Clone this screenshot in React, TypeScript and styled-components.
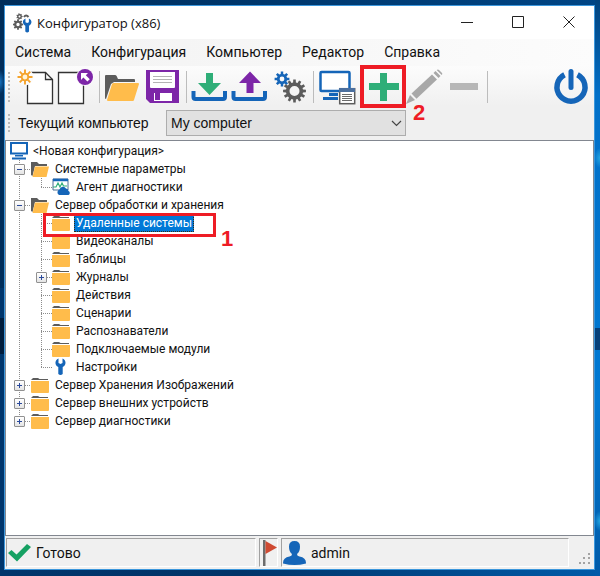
import React, { useState } from "react";
import styled, { createGlobalStyle, css } from "styled-components";

const titleFont = `"Open Sans", "Noto Sans", sans-serif`;
const ui = `Roboto, "Noto Sans", sans-serif`;
const formFont = `"Liberation Sans", Arial, sans-serif`;

const c = {
  blue: "#1565b8",
  green: "#2fae78",
  purple: "#7d26a8",
  orange: "#ffbc4b",
  gray: "#5c5c5c",
  disabled: "#a8a8a8",
  red: "#ee1c25",
};

const GlobalStyle = createGlobalStyle`
  *, *::before, *::after { box-sizing: border-box; }
  body { margin: 0; font-family: ${ui}; color: #111; }
  button, select { font: inherit; color: inherit; }
  svg { display: block; }
`;

const Desktop = styled.div`
  min-height: 100vh;
  display: flex;
  padding: 5px 5px 6px 4px;
  background:
    radial-gradient(ellipse 5px 12px at 0 82px, #1571be, transparent),
    linear-gradient(#001c3c, #001c3c) 0 318px / 4px 36px no-repeat,
    linear-gradient(#063f78, #063f78) right 328px / 5px 22px no-repeat,
    radial-gradient(ellipse 6px 10px at 100% 158px, #25a5e0, transparent),
    radial-gradient(ellipse 6px 10px at 100% 521px, #25a5e0, transparent),
    linear-gradient(#02427c, #0270c8 95px, #0078d2 400px, #005aa8) right / 5px 100% no-repeat,
    linear-gradient(90deg, #002d5a, #004585) top / 100% 50% no-repeat,
    linear-gradient(90deg, #00356b, #003468 40%, #005aa8);
`;

const Window = styled.main`
  flex: 1;
  min-width: 0;
  display: flex;
  flex-direction: column;
  border: 1px solid #3c97dc;
  background: #f0f0f0;
`;

const TitleBar = styled.header`
  display: flex;
  align-items: flex-start;
  height: 33px;
  padding-left: 8px;
  background: #fff;
`;

const TitleText = styled.div`
  flex: 1;
  display: flex;
  align-items: center;
  gap: 5px;
  height: 33px;
`;

const Title = styled.h1`
  margin: 0;
  font: 400 13px/20px ${titleFont};
  white-space: nowrap;
`;

const CaptionButton = styled.button`
  width: 51px;
  height: 31px;
  padding: 0;
  border: 0;
  background: none;
  display: grid;
  place-items: center;
  &:hover { background: #e5e5e5; }
`;

const MenuBar = styled.nav`
  display: flex;
  height: 27px;
  background: linear-gradient(90deg, #f2f2f2, #fcfcfc);
`;

const MenuItem = styled.button`
  padding: 0 10px;
  border: 0;
  background: none;
  font-size: 14px;
  line-height: 27px;
  white-space: nowrap;
`;

const ToolBars = styled.div`
  background: linear-gradient(#fcfcfc, #f0f0f0 40px);
`;

const ToolBar = styled.div`
  display: flex;
  align-items: center;
  height: 41px;
  padding: 0 3px;
`;

const Grip = styled.span<{ $dots: number }>`
  width: 2px;
  height: ${(p) => p.$dots * 4 - 2}px;
  margin-right: 6px;
  background: repeating-linear-gradient(#b9b9b9 0 2px, transparent 2px 4px);
`;

const ToolButton = styled.button<{ $end?: boolean }>`
  position: relative;
  flex: none;
  width: 40px;
  height: 40px;
  padding: 0;
  border: 0;
  background: none;
  ${(p) => p.$end && css`margin-left: auto;`}
`;

const Separator = styled.span`
  flex: none;
  width: 1px;
  height: 32px;
  margin: 0 3px;
  background: #bcbcbc;
`;

const ButtonMark = styled.span`
  position: absolute;
  z-index: 1;
  top: -2px;
  left: -4px;
  width: 46px;
  height: 43px;
  border: 4px solid ${c.red};
  pointer-events: none;
`;

const MarkNumber = styled.span<{ $x: number; $y: number }>`
  position: absolute;
  z-index: 1;
  left: ${(p) => p.$x}px;
  top: ${(p) => p.$y}px;
  color: ${c.red};
  font: 700 22px/22px ${formFont};
  pointer-events: none;
`;

const ComputerBar = styled.div`
  display: flex;
  align-items: center;
  height: 33px;
  padding: 1px 3px 2px;
  font: 14px/20px ${formFont};
`;

const ComputerLabel = styled.label`
  width: 150px;
  padding-left: 2px;
  white-space: nowrap;
`;

const SelectBox = styled.div`
  display: grid;
  align-items: center;
  width: 240px;
  & > * { grid-area: 1 / 1; }
  & > svg { justify-self: end; margin-right: 4px; pointer-events: none; }
`;

const Select = styled.select`
  appearance: none;
  width: 100%;
  height: 26px;
  padding: 0 20px 0 4px;
  border: 1px solid #adadad;
  border-radius: 0;
  background: #e1e1e1;
`;

const TreePanel = styled.section`
  flex: 1;
  padding: 1px 3px 8px;
  border: 1px solid #828790;
  background: #fff;
`;

const Branch = styled.ul`
  margin: 0;
  padding: 0;
  list-style: none;
`;

const Row = styled.div`
  position: relative;
  display: flex;
  align-items: center;
  height: 18px;
`;

const dotsY = "repeating-linear-gradient(#8c8c8c 0 1px, transparent 1px 2px)";
const dotsX = "repeating-linear-gradient(90deg, #8c8c8c 0 1px, transparent 1px 2px)";

const Guide = styled.span<{ $inner?: boolean; $elbow?: boolean; $last?: boolean }>`
  flex: none;
  display: grid;
  align-items: center;
  width: ${(p) => (p.$inner ? 21 : 22)}px;
  height: 18px;
  padding-left: 5px;
  background:
    ${dotsY} 10px 0 / 1px ${(p) => (p.$last ? "9px" : "100%")} no-repeat
    ${(p) => p.$elbow && css`, ${dotsX} 10px 9px / 12px 1px no-repeat`};
`;

const Expander = styled.button`
  width: 11px;
  height: 11px;
  padding: 0;
  border: 1px solid #919191;
  border-radius: 1px;
  background: linear-gradient(#fff, #e4e4e4);
`;

const NodeLabel = styled.button<{ $selected: boolean }>`
  height: 17px;
  margin-left: 4px;
  padding: 0 1px;
  border: 1px solid transparent;
  background: none;
  font-size: 12px;
  line-height: 15px;
  white-space: nowrap;
  ${(p) => p.$selected && css`
    border: 1px dotted #3a2a10;
    background: #0078d7;
    color: #fff;
  `}
`;

const RowMark = styled.span`
  position: absolute;
  z-index: 1;
  top: -1px;
  left: 34px;
  width: 173px;
  height: 24px;
  border: 3px solid ${c.red};
  pointer-events: none;
`;

const StatusBar = styled.footer`
  display: flex;
  gap: 3px;
  height: 33px;
  padding: 2px 1px;
  font-size: 14px;
`;

const Pane = styled.div<{ $width?: number }>`
  display: flex;
  align-items: center;
  gap: 5px;
  ${(p) => (p.$width ? css`flex: 0 0 ${p.$width}px;` : css`flex: 1;`)}
  border: 1px solid;
  border-color: #a0a0a0 #fff #fff #a0a0a0;
`;

const SizeGrip = styled.span`
  align-self: flex-end;
  margin-left: 6px;
  padding: 0 2px 2px 0;
`;

function gear(cx: number, cy: number, outer: number, root: number, hole: number, teeth: number) {
  const pts: string[] = [];
  for (let i = 0; i < teeth; i++) {
    const a = (i * 2 * Math.PI) / teeth;
    const w = Math.PI / teeth;
    [[-0.62, root], [-0.42, outer], [0.42, outer], [0.62, root]].forEach(([k, r]) => {
      pts.push(`${(cx + r * Math.cos(a + k * w)).toFixed(2)} ${(cy + r * Math.sin(a + k * w)).toFixed(2)}`);
    });
  }
  return `M${pts.join("L")}Z M${cx + hole} ${cy}a${hole} ${hole} 0 1 0 ${-2 * hole} 0a${hole} ${hole} 0 1 0 ${2 * hole} 0Z`;
}

const Tool = ({ children }: { children: React.ReactNode }) => (
  <svg width="40" height="40" viewBox="0 0 40 40" fill="none" aria-hidden="true">{children}</svg>
);

const NewIcon = () => (
  <Tool>
    <path d="M11.500 5.500H29.500L36.500 12.500V36.500H11.500Z" fill="#fff" stroke="#333" strokeWidth="1.300" />
    <path d="M29.500 5.500V12.500H36.500" stroke="#333" strokeWidth="1.300" />
    <circle cx="9" cy="10" r="8.500" fill="#fbfbfb" />
    <path d="M9 2.500V17.500M1.500 10H16.500M3.700 4.700L14.300 15.300M14.300 4.700L3.700 15.300" stroke="#f5a32b" strokeWidth="1.900" />
    <circle cx="9" cy="10" r="3.300" fill="#fff4d8" stroke="#f5a32b" strokeWidth="1.800" />
  </Tool>
);
const OpenRefIcon = () => (
  <Tool>
    <path d="M2.500 5.500H27.500V36.500H2.500Z" fill="#fff" stroke="#333" strokeWidth="1.300" />
    <circle cx="29" cy="10" r="9" fill="#fbfbfb" />
    <circle cx="29" cy="10" r="8" fill={c.purple} />
    <path d="M25 6H32L29.800 8.200L33.800 12.200L31.400 14.600L27.400 10.600L25 13Z" fill="#fff" />
  </Tool>
);
const OpenIcon = () => (
  <Tool>
    <path d="M2 9Q2 8 3 8H12Q13 8 13.600 9L15 12H31Q32 12 32 13V15H11L8 17L3 32Q2 32 2 31Z" fill={c.gray} />
    <path d="M11 16H35Q36 16 36 17L31 33Q30.700 34 30 34H5Q4 34 4 33L9 17Q9.500 16 11 16Z" fill={c.orange} />
  </Tool>
);
const SaveIcon = () => (
  <Tool>
    <path d="M3 3H36V36H7L3 32Z" fill={c.purple} />
    <path d="M7 5H32V20Q32 21 31 21H8Q7 21 7 20Z" fill="#fff" />
    <path d="M10 9.500H29M10 12.500H29M10 15.500H29" stroke="#b4b4b4" />
    <path d="M11 26H29V34H11Z" fill="#fff" />
    <path d="M12 26H17V33H12Z" fill={c.purple} />
  </Tool>
);
const Tray = () => <path d="M3.500 24V30Q3.500 32 5.500 32H33Q35 32 35 30V24" stroke={c.blue} strokeWidth="4" />;
const DownloadIcon = () => (
  <Tool>
    <Tray />
    <path d="M16 6H23V16H31L19.500 28L8 16H16Z" fill={c.green} />
  </Tool>
);
const UploadIcon = () => (
  <Tool>
    <Tray />
    <path d="M20 4.500L31 16H23.500V26H16.500V16H9Z" fill={c.purple} />
  </Tool>
);
const GearsIcon = () => (
  <Tool>
    <path d={gear(12, 12, 7.5, 5.2, 2.4, 8)} fill={c.blue} fillRule="evenodd" />
    <path d={gear(24.5, 24, 11.5, 8.6, 5, 12)} fill={c.gray} fillRule="evenodd" />
  </Tool>
);
const ComputerIcon = () => (
  <Tool>
    <rect x="3.500" y="5" width="29" height="19" rx="1" fill="#fff" stroke={c.blue} strokeWidth="2.500" />
    <path d="M12 26H21V29H12ZM6 30H21V33H6Z" fill={c.blue} />
    <rect x="22.700" y="21.700" width="15" height="15" fill="#fff" stroke={c.gray} strokeWidth="1.500" />
    <path d="M22 21H38V25H22Z" fill="#4b6f9e" />
    <path d="M25 27.500H35M25 29.500H35M25 31.500H35M25 33.500H35" stroke="#6a6a6a" />
  </Tool>
);
const PlusIcon = () => (
  <Tool><path d="M16 6H23V16H35V23H23V34H16V23H5V16H16Z" fill={c.green} /></Tool>
);
const PencilIcon = () => (
  <Tool>
    <path d="M2 37L6 28L11 33Z" fill={c.disabled} />
    <path d="M7.500 26.500L28 7.500L33 12.500L12.500 31.700Z" fill={c.disabled} />
    <path d="M29.500 6L31.500 4L36.500 9L34.500 11Z" fill={c.disabled} />
    <path d="M32.700 3Q34 2 35 3L38 6Q38.800 7 37.700 8Z" fill={c.disabled} />
  </Tool>
);
const MinusIcon = () => <Tool><path d="M6 16H34V23H6Z" fill="#b7b7b7" /></Tool>;
const PowerIcon = () => (
  <Tool>
    <path d="M13.500 7.800A14 14 0 1 0 26.500 7.800" stroke={c.blue} strokeWidth="5.500" />
    <path d="M20 4.500V20.500" stroke={c.blue} strokeWidth="5" strokeLinecap="round" />
  </Tool>
);

const wrench = "M3.500 0.500C-0.500 2 -0.500 7.500 3.300 9V16Q5.500 18 7.700 16V9C11.500 7.500 11.500 2 7.500 0.500V5L5.500 6L3.500 5Z";

const AppIcon = () => (
  <svg width="19" height="20" viewBox="0 0 19 20" aria-hidden="true">
    <path d={gear(5, 11.5, 5.2, 3.9, 1.7, 8)} fill={c.gray} fillRule="evenodd" />
    <path d={gear(6.5, 3.5, 3.2, 2.4, 1, 7)} fill={c.gray} fillRule="evenodd" />
    <path d="M11 4Q13 1 15.500 4" fill="none" stroke={c.gray} strokeWidth="2" />
    <path d={wrench} transform="translate(9.500 5) scale(0.850)" fill={c.blue} />
  </svg>
);

type Kind = "computer" | "open" | "folder" | "agent" | "wrench";

function NodeIcon({ kind }: { kind: Kind }) {
  return (
    <svg width="18" height="18" viewBox="0 0 18 18" fill="none" overflow="visible" aria-hidden="true">
      {kind === "computer" && (
        <>
          <rect x="2" y="1" width="16" height="10.500" fill="#fff" stroke={c.blue} strokeWidth="2" />
          <path d="M6 13H14V14.500H6ZM3 15.500H17V17.500H3Z" fill={c.blue} />
        </>
      )}
      {kind === "open" && (
        <>
          <path d="M0 2H6L8 4H16V6H4L1.500 16L0 15Z" fill={c.gray} />
          <path d="M4 6.500H18L15.500 17H1.500Z" fill={c.orange} />
        </>
      )}
      {kind === "folder" && (
        <>
          <path d="M0 4L2 2H7L8.500 3H17V4Z" fill={c.gray} />
          <path d="M0 5H18V16Q18 17 17 17H1Q0 17 0 16Z" fill={c.orange} />
        </>
      )}
      {kind === "agent" && (
        <>
          <path d="M1 1H16V12H1Z" fill="#fff" stroke="#4d6f94" />
          <path d="M1 2H16" stroke={c.blue} strokeWidth="2.500" />
          <path d="M1 9H4L6 5L8 9L10 5L11.500 8H15" stroke={c.green} strokeWidth="1.200" />
          <path d="M7 17A3 3 0 0 1 7.500 11.500A3.500 3.500 0 0 1 14 10.500A2.800 2.800 0 0 1 16.500 13A2.200 2.200 0 0 1 16.500 17Z" fill={c.blue} />
        </>
      )}
      {kind === "wrench" && <path d={wrench} transform="translate(3 0)" fill={c.blue} />}
    </svg>
  );
}

type Node = { name: string; kind: Kind; closed?: boolean; marked?: boolean; children?: Node[] };

const nodes: Node[] = [
  { name: "Системные параметры", kind: "open", children: [{ name: "Агент диагностики", kind: "agent" }] },
  {
    name: "Сервер обработки и хранения",
    kind: "open",
    children: [
      { name: "Удаленные системы", kind: "folder", marked: true },
      { name: "Видеоканалы", kind: "folder" },
      { name: "Таблицы", kind: "folder" },
      { name: "Журналы", kind: "folder", closed: true },
      { name: "Действия", kind: "folder" },
      { name: "Сценарии", kind: "folder" },
      { name: "Распознаватели", kind: "folder" },
      { name: "Подключаемые модули", kind: "folder" },
      { name: "Настройки", kind: "wrench" },
    ],
  },
  { name: "Сервер Хранения Изображений", kind: "folder", closed: true },
  { name: "Сервер внешних устройств", kind: "folder", closed: true },
  { name: "Сервер диагностики", kind: "folder", closed: true },
];

type ItemProps = { node: Node; last: boolean; inner?: boolean; selected: string; onSelect: (n: string) => void };

function TreeItem({ node, last, inner, selected, onSelect }: ItemProps) {
  const [open, setOpen] = useState(!node.closed);
  const expandable = node.closed || !!node.children;
  return (
    <li role="treeitem" aria-selected={selected === node.name} aria-expanded={expandable ? open : undefined}>
      <Row>
        {inner && <Guide />}
        <Guide $inner={inner} $elbow $last={last}>
          {expandable && (
            <Expander aria-label={node.name} onClick={() => setOpen(!open)}>
              <svg width="9" height="9" viewBox="0 0 9 9" stroke="#2b4a9b" aria-hidden="true">
                <path d={open ? "M2 4.500H7" : "M2 4.500H7M4.500 2V7"} />
              </svg>
            </Expander>
          )}
        </Guide>
        <NodeIcon kind={node.kind} />
        <NodeLabel $selected={selected === node.name} onClick={() => onSelect(node.name)}>{node.name}</NodeLabel>
        {node.marked && (
          <>
            <RowMark />
            <MarkNumber $x={212} $y={14}>1</MarkNumber>
          </>
        )}
      </Row>
      {open && node.children && (
        <Branch role="group">
          {node.children.map((n, i) => (
            <TreeItem key={n.name} node={n} inner last={i === node.children!.length - 1} selected={selected} onSelect={onSelect} />
          ))}
        </Branch>
      )}
    </li>
  );
}

export default function App() {
  const [selected, setSelected] = useState("Удаленные системы");
  return (
    <>
      <GlobalStyle />
      <Desktop>
        <Window>
          <TitleBar>
            <TitleText>
              <AppIcon />
              <Title>Конфигуратор (x86)</Title>
            </TitleText>
            <CaptionButton aria-label="Свернуть">
              <svg width="12" height="12" stroke="#222"><path d="M0 6.500H12" /></svg>
            </CaptionButton>
            <CaptionButton aria-label="Развернуть">
              <svg width="12" height="12" stroke="#222" fill="none"><path d="M0.500 0.500H11.500V11.500H0.500Z" /></svg>
            </CaptionButton>
            <CaptionButton aria-label="Закрыть">
              <svg width="12" height="12" stroke="#222"><path d="M0.500 0.500L11.500 11.500M11.500 0.500L0.500 11.500" /></svg>
            </CaptionButton>
          </TitleBar>
          <MenuBar>
            {["Система", "Конфигурация", "Компьютер", "Редактор", "Справка"].map((m) => (
              <MenuItem key={m}>{m}</MenuItem>
            ))}
          </MenuBar>
          <ToolBars>
            <ToolBar role="toolbar">
              <Grip $dots={8} />
              <ToolButton aria-label="Создать"><NewIcon /></ToolButton>
              <ToolButton aria-label="Из шаблона"><OpenRefIcon /></ToolButton>
              <Separator />
              <ToolButton aria-label="Открыть"><OpenIcon /></ToolButton>
              <ToolButton aria-label="Сохранить"><SaveIcon /></ToolButton>
              <Separator />
              <ToolButton aria-label="Загрузить"><DownloadIcon /></ToolButton>
              <ToolButton aria-label="Выгрузить"><UploadIcon /></ToolButton>
              <ToolButton aria-label="Параметры"><GearsIcon /></ToolButton>
              <Separator />
              <ToolButton aria-label="Компьютер"><ComputerIcon /></ToolButton>
              <Separator />
              <ToolButton aria-label="Добавить">
                <PlusIcon />
                <ButtonMark />
                <MarkNumber $x={49} $y={35}>2</MarkNumber>
              </ToolButton>
              <ToolButton aria-label="Изменить"><PencilIcon /></ToolButton>
              <ToolButton aria-label="Удалить"><MinusIcon /></ToolButton>
              <Separator />
              <ToolButton $end aria-label="Выход"><PowerIcon /></ToolButton>
            </ToolBar>
            <ComputerBar>
              <Grip $dots={5} />
              <ComputerLabel htmlFor="computer">Текущий компьютер</ComputerLabel>
              <SelectBox>
                <Select id="computer"><option>My computer</option></Select>
                <svg width="11" height="7" fill="none" stroke="#444" strokeWidth="1.200"><path d="M1 1L5.500 5.500L10 1" /></svg>
              </SelectBox>
            </ComputerBar>
          </ToolBars>
          <TreePanel>
            <Branch role="tree">
              <li role="treeitem" aria-selected={selected === "root"}>
                <Row>
                  <NodeIcon kind="computer" />
                  <NodeLabel $selected={selected === "root"} onClick={() => setSelected("root")}>{"<Новая конфигурация>"}</NodeLabel>
                </Row>
                <Branch role="group">
                  {nodes.map((n, i) => (
                    <TreeItem key={n.name} node={n} last={i === nodes.length - 1} selected={selected} onSelect={setSelected} />
                  ))}
                </Branch>
              </li>
            </Branch>
          </TreePanel>
          <StatusBar>
            <Pane $width={250}>
              <svg width="24" height="20" viewBox="0 0 24 20" aria-hidden="true">
                <path d="M1 10L4.500 7L9.500 11.500L20 1L24 4L10 18.500Z" fill="#16a163" />
              </svg>
              Готово
            </Pane>
            <Pane $width={19}>
              <svg width="17" height="27" viewBox="0 0 17 27" aria-hidden="true">
                <path d="M3 1H5.500V27H3Z" fill="#6c6c6c" />
                <path d="M5.500 2L17 8.500L5.500 15Z" fill="#cf4a32" />
              </svg>
            </Pane>
            <Pane>
              <svg width="24" height="24" viewBox="0 0 24 24" aria-hidden="true">
                <path d="M12.500 0Q18 0 18 5.500Q18 11 15 13Q15 15 17.500 15.500Q24 16.500 24 22V22.500Q18 24 12.500 24Q7 24 1 22.500V22Q1 16.500 7.500 15.500Q10 15 10 13Q7 11 7 5.500Q7 0 12.500 0Z" fill={c.blue} />
              </svg>
              admin
            </Pane>
            <SizeGrip>
              <svg width="13" height="12" viewBox="0 0 13 12" fill="#a3a3a3" aria-hidden="true">
                <path d="M10 0h2v2h-2ZM10 4h2v2h-2ZM10 9h2v2h-2ZM5 4h2v2h-2ZM5 9h2v2h-2ZM1 9h2v2h-2Z" />
              </svg>
            </SizeGrip>
          </StatusBar>
        </Window>
      </Desktop>
    </>
  );
}
